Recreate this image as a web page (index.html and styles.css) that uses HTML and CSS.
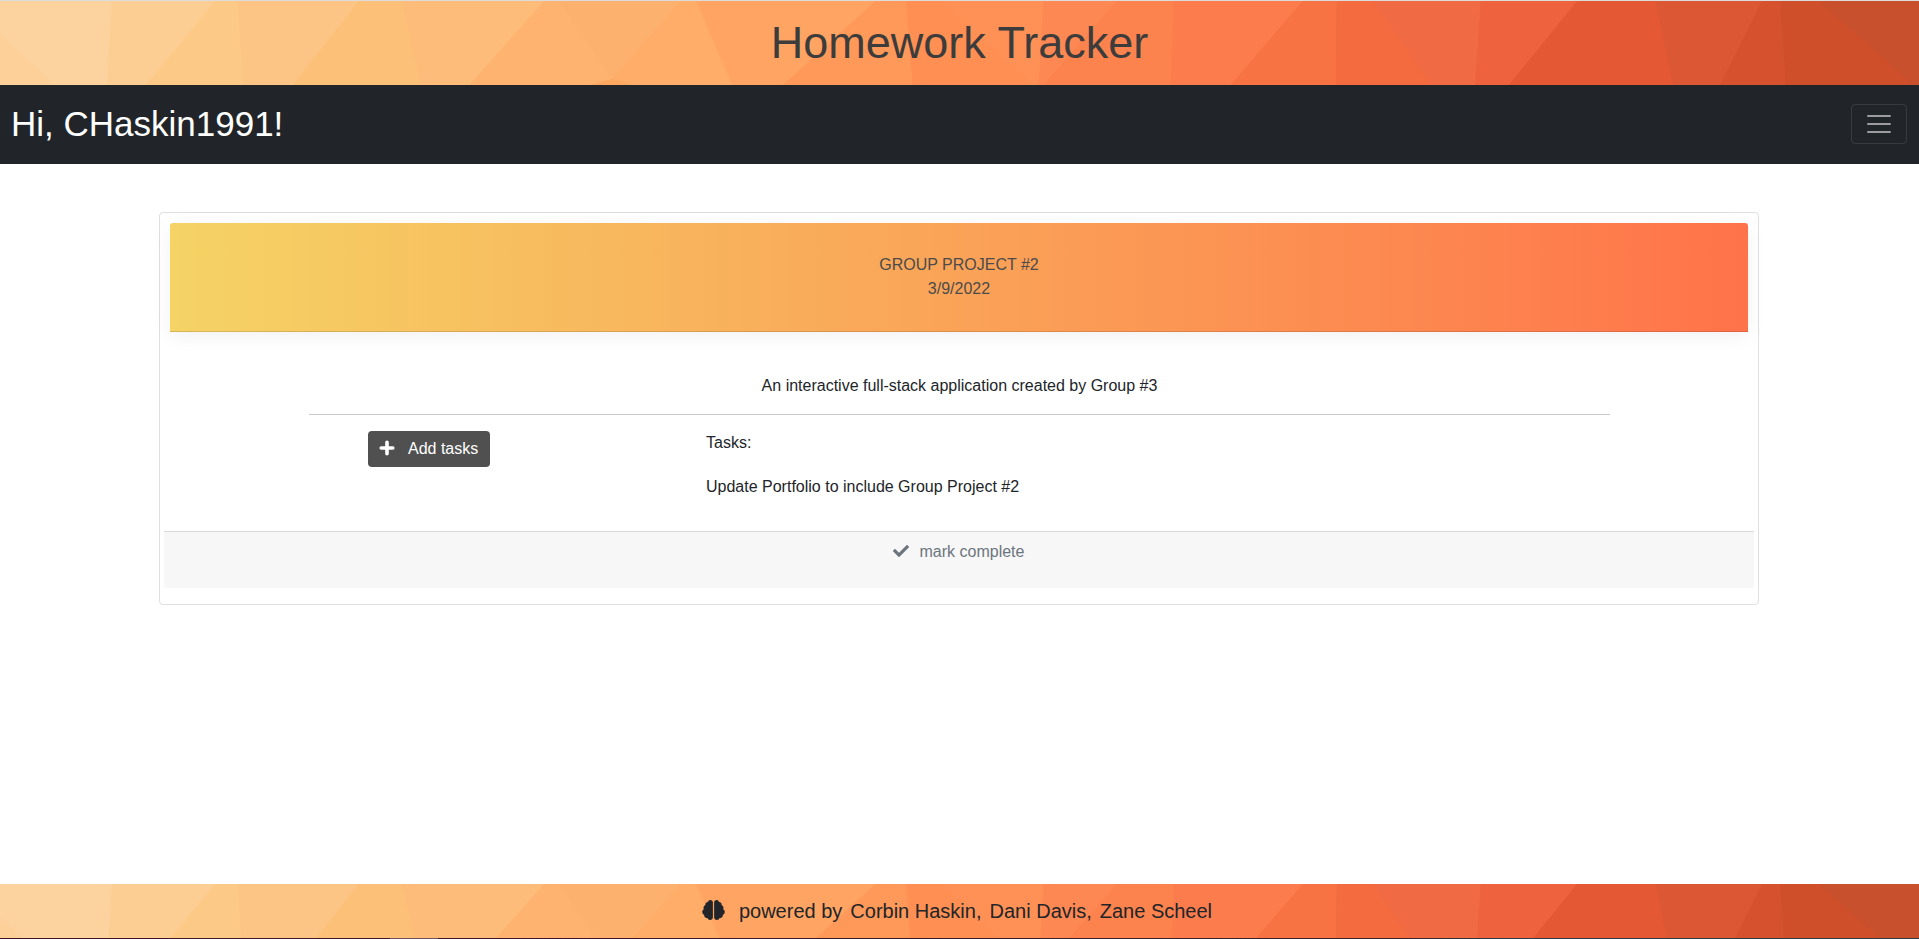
FILE: index.html
```html
<!DOCTYPE html>
<html lang="en">
<head>
<meta charset="utf-8">
<title>Homework Tracker</title>
<link rel="stylesheet" href="styles.css">
</head>
<body>
<svg class="defs" width="0" height="0" aria-hidden="true">
  <symbol id="poly" viewBox="0 0 1919 84">
    <path fill="#fcd39e" d="M0 0H1919V84H0z"/>
    <path fill="#fdd09a" d="M0 32L54 84H0z"/>
    <path fill="#fdce94" d="M111.800 0H1919V84H107z"/>
    <path fill="#fdc987" d="M215 0H1919V84H145.700z"/>
    <path fill="#fcc585" d="M237.600 0H1919V84H243z"/>
    <path fill="#fcc079" d="M358.400 0H1919V84H292.700z"/>
    <path fill="#fdbc79" d="M402 0H1919V84H420.400z"/>
    <path fill="#ffb370" d="M544 0H1919V84H469.400z"/>
    <path fill="#fdb16f" d="M558.400 0H1919V78H612z"/>
    <path fill="#ffad68" d="M680 0H1919V84H631L612 78z"/>
    <path fill="#fda75f" d="M590 84L612 78L633 84z"/>
    <path fill="#ffa463" d="M696 0H1919V84H732z"/>
    <path fill="#ff995a" d="M875.500 0H1919V84H783z"/>
    <path fill="#ff8f52" d="M906 0H1919V84H912.700z"/>
    <path fill="#ff9156" d="M942 0H1919V84H1032z"/>
    <path fill="#fe8853" d="M1043.300 0H1919V84H1038.800z"/>
    <path fill="#fc834d" d="M1116.700 0H1919V84H1043.300z"/>
    <path fill="#fc7c4e" d="M1173.500 0H1919V84H1170.600z"/>
    <path fill="#f87343" d="M1302.700 0H1919V84H1230.600z"/>
    <path fill="#f36b3f" d="M1336.600 0H1919V84H1335.700z"/>
    <path fill="#f06a44" d="M1373 0H1919V84H1431z"/>
    <path fill="#ee633e" d="M1480.600 0H1919V84H1475z"/>
    <path fill="#e45934" d="M1577 0H1919V84H1508.800z"/>
    <path fill="#dc5835" d="M1655.300 0H1919V84H1673z"/>
    <path fill="#d6522e" d="M1761.900 0H1919V84H1720z"/>
    <path fill="#cf4f2a" d="M1780.200 0H1919V84H1786z"/>
    <path fill="#c8502d" d="M1818.600 0H1919V84H1913.700z"/>
  </symbol>
</svg>
<header class="banner">
  <svg class="backdrop" width="1919" height="84"><use href="#poly" width="1919" height="84"/></svg>
  <h1 class="title">Homework Tracker</h1>
</header>
<nav class="navbar">
  <span class="greeting">Hi, CHaskin1991!</span>
  <button class="toggler" aria-label="Menu">
    <svg width="30" height="30" viewBox="0 0 30 30"><path stroke="#fff" stroke-opacity=".55" stroke-linecap="round" stroke-width="2" d="M4 7h22M4 15h22M4 23h22"/></svg>
  </button>
</nav>
<main class="content">
  <article class="card">
    <div class="card-head"><div>GROUP PROJECT #2</div><div>3/9/2022</div></div>
    <div class="card-body">
      <p class="description">An interactive full-stack application created by Group #3</p>
      <div class="row">
        <button class="add"><svg width="16" height="16" viewBox="0 0 16 16"><path d="M8 2.200V13.800M2.200 8H13.800" stroke="#fff" stroke-width="3.600" stroke-linecap="round"/></svg><span>Add tasks</span></button>
        <div class="tasks"><p>Tasks:</p><p>Update Portfolio to include Group Project #2</p></div>
      </div>
    </div>
    <div class="card-foot">
      <svg width="16" height="16" viewBox="0 0 512 512"><path fill="#6c757d" d="M173.900 439.400l-166.400-166.400c-10-10-10-26.200 0-36.200l36.200-36.200c10-10 26.200-10 36.200 0L192 312.700 432.100 72.600c10-10 26.200-10 36.200 0l36.200 36.200c10 10 10 26.200 0 36.200l-294.400 294.400c-10 10-26.200 10-36.200 0z"/></svg>
      <span>mark complete</span>
    </div>
  </article>
</main>
<footer class="footer">
  <svg class="backdrop" width="1919" height="84"><use href="#poly" width="1919" height="84"/></svg>
  <div class="credits">
    <svg class="brain" width="23" height="20" viewBox="0 0 576 512"><path fill="#212529" d="M208 0c-29.900 0-54.700 20.500-61.800 48.200-.8 0-1.400-.2-2.200-.2-35.300 0-64 28.700-64 64 0 4.800.6 9.500 1.700 14C52.500 138 32 166.600 32 200c0 12.600 3.200 24.300 8.300 34.900C16.300 248.700 0 274.300 0 304c0 33.300 20.400 61.900 49.400 73.900-.9 4.600-1.400 9.300-1.400 14.100 0 39.800 32.200 72 72 72 4.100 0 8.100-.5 12-1.200 9.600 28.500 36.200 49.200 68 49.200 39.800 0 72-32.200 72-72V64c0-35.300-28.700-64-64-64zm368 304c0-29.700-16.300-55.300-40.300-69.100 5.200-10.600 8.300-22.300 8.300-34.900 0-33.400-20.500-62-49.700-74 1-4.500 1.700-9.200 1.700-14 0-35.300-28.700-64-64-64-.8 0-1.500.2-2.200.2C422.700 20.500 397.900 0 368 0c-35.300 0-64 28.600-64 64v376c0 39.800 32.200 72 72 72 31.800 0 58.400-20.700 68-49.200 3.900.7 7.900 1.200 12 1.200 39.800 0 72-32.200 72-72 0-4.800-.5-9.500-1.400-14.100 29-12 49.400-40.600 49.400-73.900z"/></svg>
    <span>powered by</span><span>Corbin Haskin,</span><span>Dani Davis,</span><span>Zane Scheel</span>
  </div>
</footer>
</body>
</html>
```

FILE: styles.css
```css
* { box-sizing: border-box; }
body {
  margin: 0;
  height: 939px;
  display: flex;
  flex-direction: column;
  overflow: hidden;
  border-top: 1px solid #dcdcdc;
  background: #fff;
  color: #212529;
  font: 16px/24px "Liberation Sans", Arial, sans-serif;
}
p { margin: 0; }
button { font: inherit; cursor: pointer; }
.defs { position: absolute; }
.banner, .footer { position: relative; overflow: hidden; flex: none; }
.banner { height: 84px; }
.backdrop { position: absolute; top: 0; left: 0; }
.title {
  position: relative;
  margin: 0;
  padding-top: 15px;
  text-align: center;
  font-size: 45px;
  line-height: 54px;
  font-weight: 400;
  color: #3c3c3c;
}
.navbar {
  flex: none;
  height: 79px;
  padding: 0 12px 2px 11px;
  display: flex;
  align-items: center;
  justify-content: space-between;
  background: #212529;
}
.greeting { font-size: 35px; line-height: 52px; color: #fff; }
.toggler {
  width: 56px;
  height: 40px;
  padding: 0;
  display: flex;
  align-items: center;
  justify-content: center;
  background: none;
  border: 1px solid rgba(255, 255, 255, .1);
  border-radius: 4px;
}
.content { flex: 1; padding: 48px 160px 0 159px; }
.card {
  height: 393px;
  padding: 10px 4px 16px;
  display: flex;
  flex-direction: column;
  border: 1px solid rgba(0, 0, 0, .125);
  border-radius: 4px;
}
.card-head {
  height: 109px;
  margin: 0 6px;
  padding-top: 30px;
  text-align: center;
  color: #4b4b4b;
  background: linear-gradient(to right, #f5d365, #ff734a) border-box;
  border-bottom: 1px solid rgba(0, 0, 0, .125);
  border-radius: 3px 3px 0 0;
  box-shadow: 0 4px 20px rgba(0, 0, 0, .06);
}
.card-body { flex: 1; padding: 42px 144px 0 145px; }
.description {
  padding-bottom: 16px;
  text-align: center;
  border-bottom: 1px solid #c8c9ca;
}
.row { display: flex; align-items: flex-start; padding: 16px 0 0 59px; }
.add {
  width: 122px;
  height: 36px;
  padding: 0 0 0 11px;
  display: flex;
  align-items: center;
  gap: 13px;
  border: 0;
  border-radius: 4px;
  background: #505050;
  color: #fff;
}
.add svg { margin-top: -2px; }
.tasks { margin-left: 216px; display: grid; gap: 20px; }
.card-foot {
  height: 57px;
  padding-top: 8px;
  display: flex;
  justify-content: center;
  gap: 10px;
  color: #6c757d;
  background: #f7f7f7;
  border-top: 1px solid #d9d9d9;
  border-radius: 0 0 3px 3px;
}
.card-foot svg { margin: 3px 1px 0 -1px; }
.footer { height: 55px; }
.footer::after {
  content: "";
  position: absolute;
  inset: auto 0 0;
  height: 1px;
  background: linear-gradient(to right, #3f1528 390px, #70505c 390px 438px, #3f1528 438px 520px, #3a2428 1400px, #2e3b45 1500px);
}
.credits {
  position: relative;
  display: flex;
  justify-content: center;
  gap: 8px;
  padding: 15px 5px 0 0;
  font-size: 20px;
  line-height: 24px;
}
.brain { margin: 1px 6px 0 0; }
```
